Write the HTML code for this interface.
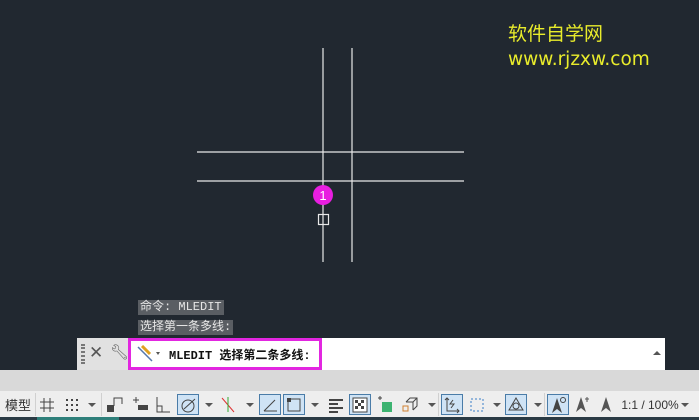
<!DOCTYPE html>
<html><head><meta charset="utf-8"><style>
*{margin:0;padding:0;box-sizing:border-box}
body{width:699px;height:420px;background:#212830;position:relative;overflow:hidden;font-family:"Liberation Sans","Noto Sans CJK SC",sans-serif}
.abs{position:absolute}
.hist{position:absolute;left:138px;background:#5a5e63;color:#e6e6e6;font-size:12px;line-height:15px;padding:0 2px;font-family:"Liberation Mono","Noto Sans CJK SC",monospace}
.tb{position:absolute;top:391px;left:0;width:699px;height:27px;background:#eeeeee}
.ic{position:absolute;top:394px;height:21px;font-size:13px;color:#333;display:flex;align-items:center;justify-content:center}
.sel{background:#cfe3f5;border:1px solid #4a7ca8}
.dd{position:absolute;top:403px;width:0;height:0;border-left:4px solid transparent;border-right:4px solid transparent;border-top:4px solid #555}
.sep{position:absolute;top:393px;width:1px;height:23px;background:#d0d0d0}
</style></head><body>
<svg class="abs" style="left:0;top:0" width="699" height="300">
<g stroke="#e8e8e8" stroke-width="1.2">
<line x1="323" y1="48" x2="323" y2="262"/>
<line x1="352" y1="48" x2="352" y2="262"/>
<line x1="197" y1="152" x2="464" y2="152"/>
<line x1="197" y1="181" x2="464" y2="181"/>
</g>
<rect x="318.5" y="214.5" width="10" height="10" fill="none" stroke="#e8e8e8" stroke-width="1.2"/>
<circle cx="323" cy="195" r="10" fill="#e81ee0"/>
<text x="323" y="200" fill="#fff" font-size="13" text-anchor="middle" font-family="Liberation Sans">1</text>
</svg>
<div class="abs" style="left:508px;top:22px;color:#e9ec2b;font-size:19px;line-height:24px;font-family:'DejaVu Sans','Noto Sans CJK SC',sans-serif">软件自学网</div>
<div class="abs" style="left:508px;top:48px;color:#e9ec2b;font-size:18.5px;line-height:24px;font-family:'DejaVu Sans',sans-serif">www.rjzxw.com</div>
<div class="hist" style="top:300px">命令: MLEDIT</div>
<div class="hist" style="top:320px">选择第一条多线:</div>
<div class="abs" style="left:77px;top:338px;width:588px;height:32px;background:#fff"></div>
<div class="abs" style="left:77px;top:338px;width:52px;height:32px;background:#e1e1e1"></div>
<div class="abs" style="left:81px;top:344px;width:4px;height:20px;border-left:2px dotted #777;border-right:2px dotted #777"></div>
<div class="abs" style="left:89px;top:343px;font-size:17px;color:#555">✕</div>
<div class="abs" style="left:110px;top:343px;font-size:15px;color:#666">🔧︎</div>
<div class="abs" style="left:128px;top:338px;width:194px;height:32px;border:3px solid #e226e0"></div>
<svg class="abs" style="left:136px;top:345px" width="28" height="18"><line x1="2" y1="2" x2="16" y2="16" stroke="#5577aa" stroke-width="1.5"/><line x1="6" y1="1" x2="14" y2="9" stroke="#e0a020" stroke-width="3"/><path d="M20 7l4 0l-2 3z" fill="#555"/></svg>
<div class="abs" style="left:169px;top:346px;font-size:12px;font-weight:bold;color:#111;font-family:'Liberation Mono','Noto Sans CJK SC',monospace">MLEDIT 选择第二条多线:</div>
<div class="abs" style="left:653px;top:351px;border-left:4px solid transparent;border-right:4px solid transparent;border-bottom:4px solid #555"></div>
<div class="abs" style="left:0;top:370px;width:699px;height:21px;background:#d9d9d9"></div>
<div class="tb"></div>
<div class="abs" style="left:0;top:417px;width:699px;height:3px;background:#2a3a44"></div>
<div class="abs" style="left:37px;top:417px;width:82px;height:3px;background:#2e7f7a"></div>
<div class="ic" style="left:4px;width:28px;font-size:13px">模型</div>
<div class="sep" style="left:35px"></div>
<svg class="abs" style="left:38px;top:394px" width="18" height="21"><path d="M6 4v14M12 4v14M2 8h14M2 14h14" stroke="#444"/></svg>
<svg class="abs" style="left:63px;top:394px" width="18" height="21"><g fill="#444"><rect x="3" y="5" width="2" height="2"/><rect x="8" y="5" width="2" height="2"/><rect x="13" y="5" width="2" height="2"/><rect x="3" y="10" width="2" height="2"/><rect x="8" y="10" width="2" height="2"/><rect x="13" y="10" width="2" height="2"/><rect x="3" y="15" width="2" height="2"/><rect x="8" y="15" width="2" height="2"/><rect x="13" y="15" width="2" height="2"/></g></svg>
<div class="dd" style="left:88px"></div>
<div class="sep" style="left:101px"></div>
<svg class="abs" style="left:105px;top:394px" width="20" height="21"><rect x="2" y="11" width="7" height="7" fill="#444"/><path d="M9 12V4h8v6" fill="none" stroke="#444"/></svg>
<svg class="abs" style="left:130px;top:394px" width="20" height="21"><path d="M3 6h6M6 3v6" stroke="#444"/><rect x="8" y="11" width="10" height="5" fill="#444"/></svg>
<svg class="abs" style="left:153px;top:394px" width="20" height="21"><path d="M4 3v15h13M4 12h5v6" fill="none" stroke="#444"/></svg>
<div class="ic sel" style="left:177px;width:22px"><svg width="18" height="18"><circle cx="9" cy="10" r="6" fill="none" stroke="#444"/><path d="M5 13l11-10" stroke="#444"/></svg></div>
<div class="dd" style="left:205px"></div>
<svg class="abs" style="left:218px;top:394px" width="20" height="21"><path d="M4 4l12 14" stroke="#d33"/><path d="M10 3v15" stroke="#3a3"/></svg>
<div class="dd" style="left:246px"></div>
<div class="ic sel" style="left:259px;width:22px"><svg width="18" height="18"><path d="M3 15h13M3 15l11-11" fill="none" stroke="#444"/></svg></div>
<div class="ic sel" style="left:283px;width:22px"><svg width="18" height="18"><rect x="3" y="3" width="12" height="12" fill="none" stroke="#444"/><rect x="2" y="2" width="4" height="4" fill="#444"/></svg></div>
<div class="dd" style="left:311px"></div>
<svg class="abs" style="left:326px;top:394px" width="20" height="21"><path d="M3 6h14M3 10h9M3 14h14M3 18h9" stroke="#444" stroke-width="2"/></svg>
<div class="ic sel" style="left:349px;width:22px"><svg width="16" height="16"><rect x="1" y="1" width="14" height="14" fill="#fff" stroke="#444"/><path d="M3 3h3v3H3zM9 3h3v3H9zM6 6h3v3H6zM3 9h3v3H3zM9 9h3v3H9z" fill="#444"/></svg></div>
<svg class="abs" style="left:375px;top:394px" width="20" height="21"><path d="M3 4h4M5 2v4" stroke="#444"/><rect x="7" y="8" width="10" height="10" fill="#3cb371"/></svg>
<svg class="abs" style="left:400px;top:394px" width="20" height="21"><rect x="3" y="12" width="5" height="5" fill="none" stroke="#d08030"/><path d="M6 8l4-4h7v8l-4 4M6 8h7v8M13 8l4-4" fill="none" stroke="#444"/></svg>
<div class="dd" style="left:428px"></div>
<div class="sep" style="left:438px"></div>
<div class="ic sel" style="left:441px;width:22px"><svg width="18" height="18"><path d="M4 2v13h12M2 4l2-2 2 2M14 13l2 2-2 2" fill="none" stroke="#444"/><path d="M10 4l-3 4h4l-3 4" fill="none" stroke="#444"/></svg></div>
<svg class="abs" style="left:467px;top:394px" width="20" height="21"><rect x="4" y="5" width="12" height="12" fill="none" stroke="#3a7ec8" stroke-dasharray="2 2"/></svg>
<div class="dd" style="left:493px"></div>
<div class="ic sel" style="left:505px;width:22px"><svg width="18" height="18"><path d="M9 2l7 12H2z" fill="none" stroke="#444"/><circle cx="9" cy="10" r="3" fill="none" stroke="#444"/></svg></div>
<div class="dd" style="left:534px"></div>
<div class="sep" style="left:544px"></div>
<div class="ic sel" style="left:547px;width:22px"><svg width="18" height="18"><path d="M8 2l5 15-5-4-5 4z" fill="#444"/><circle cx="14" cy="4" r="2.5" fill="none" stroke="#444"/></svg></div>
<svg class="abs" style="left:572px;top:394px" width="20" height="21"><path d="M9 3l5 15-5-4-5 4z" fill="#555"/><path d="M15 3v5M13 5h4" stroke="#555"/></svg>
<svg class="abs" style="left:596px;top:394px" width="20" height="21"><path d="M10 3l5 15-5-4-5 4z" fill="#555"/></svg>
<div class="ic" style="left:620px;width:60px;font-size:12px;color:#333">1:1 / 100%</div>
<div class="dd" style="left:681px"></div>
</body></html>
